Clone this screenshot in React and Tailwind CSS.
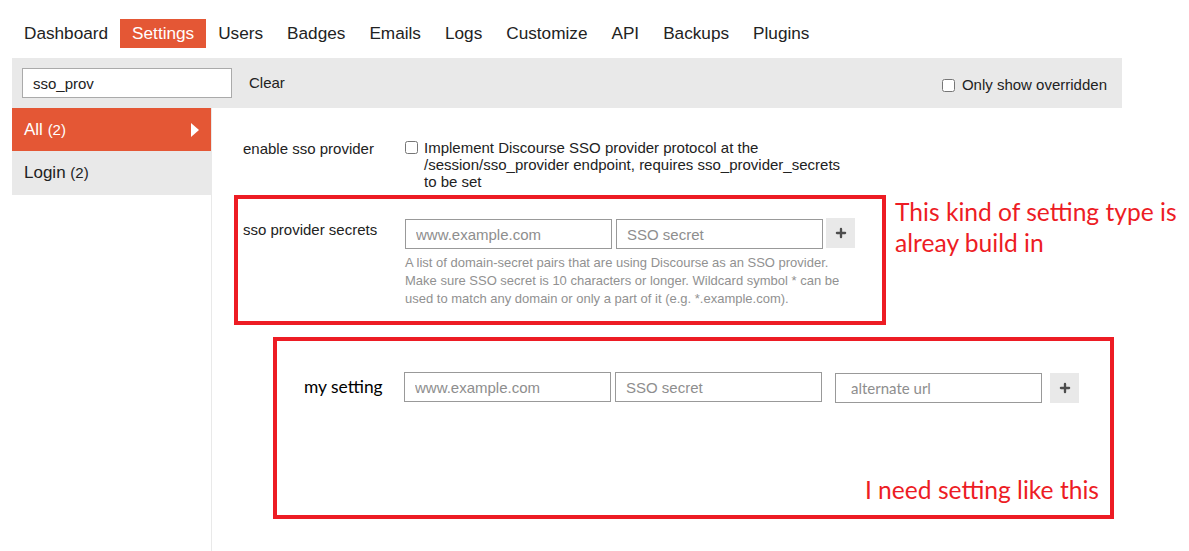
import { Plus } from 'lucide-react';

const tabs = ['Dashboard', 'Settings', 'Users', 'Badges', 'Emails', 'Logs', 'Customize', 'API', 'Backups', 'Plugins'];

const PlusButton = ({ className = '' }) => (
  <button className={`flex items-center justify-center w-[29px] h-[30px] bg-[#e9e9e9] text-[#4d4d4d] ${className}`}>
    <Plus size={14} strokeWidth={4} />
  </button>
);

const TextBox = ({ placeholder, className = '' }) => (
  <input
    placeholder={placeholder}
    className={`h-[30px] w-[207px] border border-[#999] bg-white px-[10px] text-[15px] placeholder:text-[#8e8e8e] outline-none ${className}`}
  />
);

const App = () => {
  return (
    <div className="min-h-[551px] bg-white text-[#222] font-['Liberation_Sans',Arial,sans-serif] flex flex-col">

      {/* top nav */}
      <nav className="flex ml-[12px] mt-[19px] text-[17.2px]">
        {tabs.map((t) => (
          <a
            key={t}
            className={`h-[29px] px-[12px] flex items-center ${t === 'Settings' ? 'bg-[#e45735] text-white' : 'text-[#222]'}`}
          >
            {t}
          </a>
        ))}
      </nav>

      {/* filter bar */}
      <div className="ml-[12px] w-[1110px] mt-[10px] h-[50px] bg-[#e9e9e9] flex items-center pl-[10px] pr-[15px]">
        <input
          defaultValue="sso_prov"
          className="h-[30px] w-[210px] border border-[#aaa] bg-white px-[10px] text-[15px] text-[#222] outline-none"
        />
        <span className="ml-[17px] text-[15px]">Clear</span>
        <label className="ml-auto flex items-center gap-[7px] text-[15px] mt-[4px]">
          <input type="checkbox" className="w-[13px] h-[13px]" />
          Only show overridden
        </label>
      </div>

      <div className="flex flex-1">
        {/* sidebar */}
        <div className="ml-[12px] w-[200px] border-r border-[#e9e9e9] min-h-[443px]">
          <div className="h-[43px] bg-[#e45735] text-white text-[17px] flex items-center pl-[12px] pr-[12px]">
            <span>All <span className="text-[15px]">(2)</span></span>
            <svg className="ml-auto" width="8" height="14" viewBox="0 0 8 14"><path d="M0 0 L8 7 L0 14 Z" fill="#fff" /></svg>
          </div>
          <div className="h-[44px] bg-[#e9e9e9] text-[17px] flex items-center pl-[12px]">
            <span>Login <span className="text-[15px]">(2)</span></span>
          </div>
        </div>

        {/* content */}
        <div className="pl-[22px] pt-[30px]">

          <div className="flex pl-[9px] text-[15px]">
            <div className="w-[162px]">enable sso provider</div>
            <div className="flex items-start gap-[6px] w-[440px] leading-[17px] pt-[1px]">
              <input type="checkbox" className="w-[13px] h-[13px] mt-[2px] shrink-0" />
              <span>Implement Discourse SSO provider protocol at the /session/sso_provider endpoint, requires sso_provider_secrets to be set</span>
            </div>
          </div>

          <div className="flex mt-[5px]">
            <div className="w-[652px] h-[130px] border-4 border-[#ed1c24] pl-[5px] pt-[20px] flex text-[15px]">
              <div className="w-[162px]">sso provider secrets</div>
              <div>
                <div className="flex gap-[4px]">
                  <TextBox placeholder="www.example.com" />
                  <TextBox placeholder="SSO secret" />
                  <PlusButton className="ml-[-1px] -mt-[1px]" />
                </div>
                <p className="mt-[5px] w-[445px] text-[13px] leading-[18px] text-[#919191]">
                  A list of domain-secret pairs that are using Discourse as an SSO provider. Make sure SSO secret is 10 characters or longer. Wildcard symbol * can be used to match any domain or only a part of it (e.g. *.example.com).
                </p>
              </div>
            </div>
            <div className="ml-[9px] mt-[1px] text-[#ed1c24] text-[24.6px] leading-[31px] font-['Lato',sans-serif]">
              This kind of setting type is<br />alreay build in
            </div>
          </div>

          <div className="ml-[39px] mt-[12px] w-[841px] h-[182px] border-4 border-[#ed1c24] pl-[27px] pr-[11px] pt-[30px] flex flex-col">
            <div className="flex items-center">
              <div className="w-[100px] text-[17.4px] font-['Lato',sans-serif] text-black">my setting</div>
              <div className="flex items-center gap-[4px]">
                <TextBox placeholder="www.example.com" />
                <TextBox placeholder="SSO secret" />
                <TextBox placeholder="alternate url" className="ml-[9px] mt-[2px] w-[207px] px-[15px] font-['Lato',sans-serif] text-[14px]" />
                <PlusButton className="ml-[4px] mt-[2px]" />
              </div>
            </div>
            <div className="mt-auto mb-[6px] self-end text-[#ed1c24] text-[24.6px] font-['Lato',sans-serif]">
              I need setting like this
            </div>
          </div>
        </div>
      </div>
    </div>
  );
};

export default App;
